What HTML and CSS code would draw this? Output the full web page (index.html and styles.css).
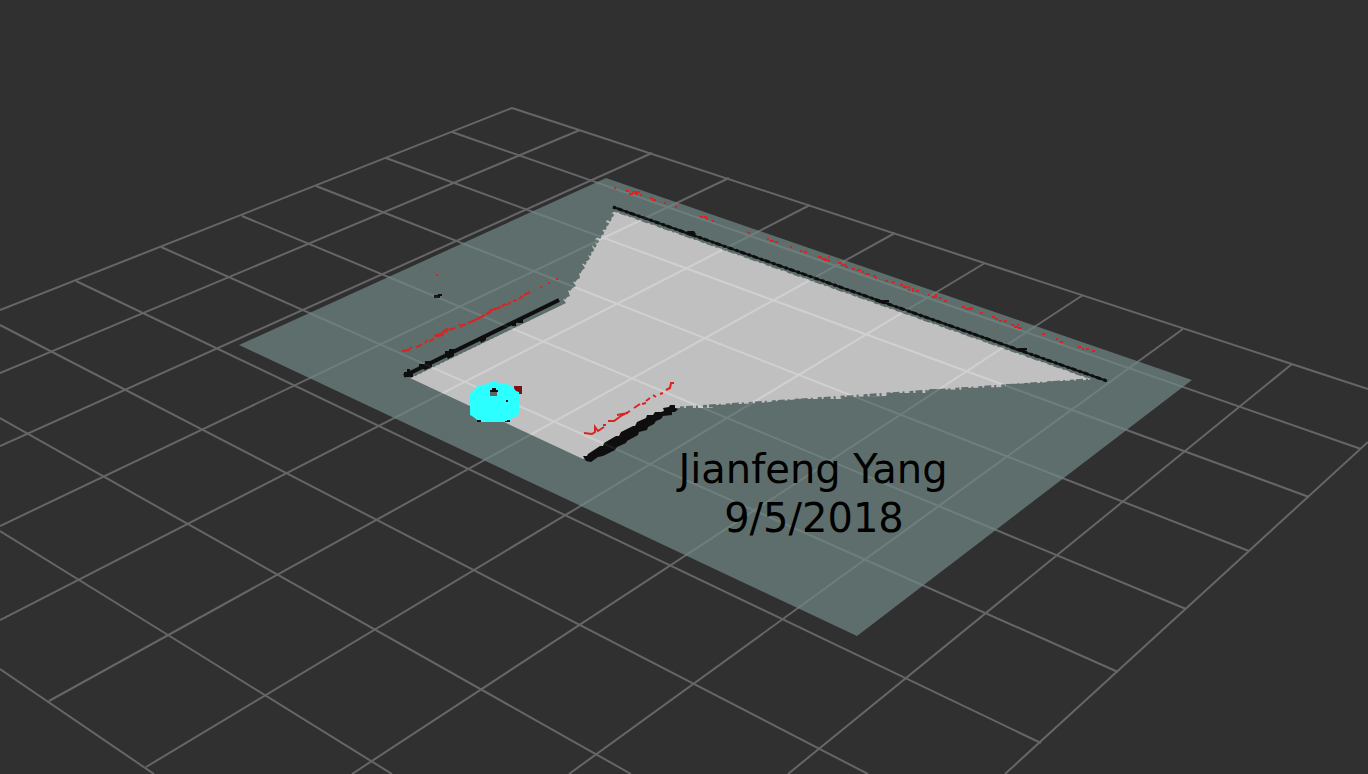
FILE: index.html
```html
<!DOCTYPE html>
<html lang="en">
<head>
<meta charset="utf-8">
<title>Map view</title>
<link rel="stylesheet" href="styles.css">
</head>
<body>
<main class="viewport">
<svg class="scene" viewBox="0 0 1368 774" preserveAspectRatio="xMidYMid slice" role="img" aria-label="Occupancy map with robot and laser scan">
  <g class="grid">
    <!-- rows -->
    <path d="M512 108L1368 389M452 132L1361 449M386 158L1309 497M316 186L1249 551M242 216L1186 609M161 247L1118 672M76 281L1041 743M0 325L868 774M0 418L631 774M0 531L168 635L392 774M0 669L154 774"/>
    <!-- columns -->
    <path d="M512 108L0 310M580 130L0 373M652 153L0 446M729 178L0 526M810 205L0 620M895 233L49 701M985 263L146 767M1083 295L352 774M1183 329L569 774M1292 364L788 774M1368 442L1005 774"/>
  </g>
  <g class="map">
    <path class="unknown" d="M606 178L1192 380L857 636L239 345Z"/>
    <path class="free" d="M615 211L620 213L1091 379L1088 380L1060 381L1059 383L1054 381L1040 383L1006 384L1005 387L968 388L967 390L930 389L925 393L888 393L886 396L844 397L842 399L800 399L780 401L760 403L740 404L716 405L712 408L675 408L590 456L583 459L410 378L566 303L563 299L570 296L568 291L576 286L573 282L580 278L579 273L585 268L582 264L590 259L588 255L594 250L592 246L598 242L595 239L604 234L602 231L607 226L606 221L612 218L611 214Z"/>
    <path class="frays" d="M614 210L1088 377"/>
    <path class="frays wide" d="M410 377L564 302"/>
    <path class="frays wide" d="M613 214L564 299"/>
    <path class="frays" d="M680 408L845 397L1088 380"/>
    <path class="wall" d="M613 207L1107 381"/>
    <path class="wall rough" d="M613 207L1107 381"/>
    <path class="lumps" d="M684 233l4-2h6l2 3-6 2zM874 301l6-1h9v2l-6 2zM1014 350l6-2h7v2l-5 2z"/>
    <path class="wall thick" d="M404 376L559 300"/>
    <path class="lumps" d="M404 372h3v-3h3v3h3v5h-9zM419 367v-3h6v-3h7v6l-7 3zM445 354v-3h4v-2h5v7l-6 3zM479 338l7-3v5l-5 3zM512 322h4v4h-4zM518 319h5v4h-5zM434 295h4v-1h4v2h-2v2h-6z"/>
    <path class="lumps" d="M583 456L587 456L588 454L600 446L603 446L604 443L616 436L619 436L621 432L633 426L635 426L637 422L646 418L647 415L653 415L655 412L661 412L664 411L663 408L669 407L670 405L675 405L675 408L678 409L675 412L672 412L672 415L663 416L661 419L656 421L654 424L648 427L647 430L639 432L638 435L627 441L626 443L617 447L615 450L603 456L598 457L591 462L586 461Z"/>
  </g>
  <g class="scan">
    <path d="M614 188h2M626 191h3M629 194h4M632 192h6M635 194h3M638 192h2M640 195h2M650 198h3M652 200h4M664 203h2M675 207h2M700 217h3M704 217h3M706 219h2M712 221h2M748 233h2M767 239h2M770 241h4M775 242h3M790 247h2M800 251h2M804 252h3M818 257h4M822 259h4M824 260h5M828 257h2M828 261h2M838 263h4M841 265h5M845 267h3M852 269h3M857 270h4M862 272h2M865 274h5M873 276h3M875 278h2M885 281h3M892 282h3M900 285h3M903 287h4M908 287h2M908 290h2M912 289h2M912 291h2M916 291h3M928 295h2M932 297h5M935 295h2M939 298h3M944 301h3M962 307h3M965 309h7M970 308h3M980 313h3M992 317h3M995 319h3M999 321h3M1004 321h3M1011 325h3M1014 327h4M1017 325h2M1018 328h4M1042 334h3M1056 339h2M1060 342h3M1078 347h3M1082 349h2M1086 349h3M1092 351h3M436 275h2M540 287h2M548 283h2M556 279h2"/>
    <path d="M402 351L410 350M409 349L412 347M416 347L419 346L422 344M425 343L427 340M429 341L434 339M434 336L441 334L446 329M437 337L444 334M446 333L448 328M449 330L455 328M459 324L462 327M462 325L466 325M468 323L473 321L485 315M486 314L491 312M489 311L498 308L501 307M502 306L506 304M507 305L511 302M513 301L517 300M519 299L523 296M524 295L530 292"/>
    <path d="M584 433L592 434L595 432L595 427L598 431L604 427M603 425L606 425M608 421L614 421L621 416L630 411M617 415L628 413M634 408L640 404M642 404L646 403M646 401L650 398M653 395L656 397M660 394L663 393M666 390L670 388L671 383L674 383"/>
  </g>
  <g class="robot">
    <path class="laser" d="M514 386h8v8h-8z"/>
    <path class="body" d="M470 393L474 390L476 387L480 385L489 384L490 382L497 382L498 384L507 384L513 387L516 391L519 392V413L516 417L512 418L510 422H479L476 419L472 416L470 415Z"/>
    <path class="sensor" d="M490 391h7v5h-7z"/>
    <path class="detail" d="M490 392v-2h2v-2h4v2h2v2zM506 400h2v2h-2zM477 420h4v2h-4zM507 420h3v2h-5v-1h2z"/>
  </g>
  <text class="caption" x="813" y="483">Jianfeng Yang</text>
  <text class="caption" x="814" y="532">9/5/2018</text>
</svg>
</main>
</body>
</html>
```
FILE: styles.css
```css
body {
  margin: 0;
  background: #303030;
}

.viewport {
  display: flex;
  height: 100vh;
  overflow: hidden;
}

.scene {
  flex: 1;
  min-width: 0;
  height: 100%;
}

.grid {
  fill: none;
  stroke: #666668;
  stroke-width: 2;
}

.map {
  opacity: 0.7;
}

.unknown {
  fill: #728986;
}

.free {
  fill: #fefefe;
}

.frays {
  fill: none;
  stroke: #728986;
  stroke-width: 3;
  stroke-dasharray: 4 2 7 3 2 5;
}

.frays.wide {
  stroke-dasharray: 3 2;
}

.wall {
  fill: none;
  stroke: #000;
  stroke-width: 2;
}

.wall.rough {
  stroke-width: 3;
  stroke-dasharray: 3 2 5 3;
}

.wall.thick {
  stroke-width: 4;
}

.lumps {
  fill: #000;
}

.scan {
  fill: none;
  stroke: #d92423;
  stroke-width: 2;
}

.laser {
  fill: #7c1014;
}

.body {
  fill: #2cffff;
}

.sensor {
  fill: #5c6664;
}

.detail {
  fill: #101010;
}

.caption {
  font-family: "DejaVu Sans", sans-serif;
  font-size: 40px;
  text-anchor: middle;
  fill: #000;
}
```
